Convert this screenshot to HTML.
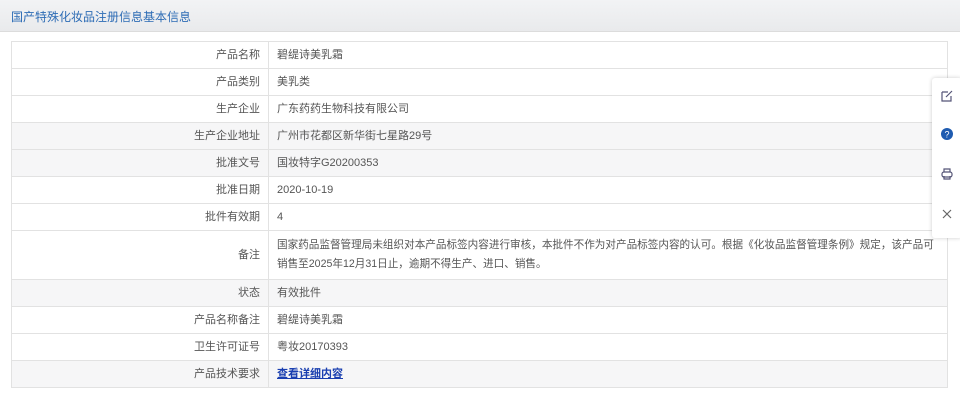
<!DOCTYPE html>
<html><head><meta charset="utf-8"><style>
body{margin:0;width:960px;height:401px;background:#fff;font-family:"Liberation Sans","Noto Sans CJK SC",sans-serif;font-size:11px;color:#555;position:relative;overflow:hidden}
.hd{position:absolute;left:0;top:0;width:960px;height:31px;background:linear-gradient(#f2f3f5,#e9eaec);border-bottom:1px solid #dcdcdc}
.hd span{position:absolute;left:11px;top:8px;color:#2d6cb5;font-size:12px}
table{position:absolute;left:11px;top:41px;width:937px;border-collapse:collapse;border:1px solid #ddd}
td{border:1px solid #e2e2e2;height:26px;padding:0 8px;line-height:17px}
td.l{width:240px;text-align:right;color:#555}
tr.g td{background:#f6f6f7}
a{color:#1a3fb0;text-decoration:underline;font-weight:bold}
.side{position:absolute;left:932px;top:78px;width:30px;height:160px;background:#fff;box-shadow:0 0 4px rgba(0,0,0,.2);border-radius:3px}
.side div{position:absolute;left:9px;width:12px;height:12px}
</style></head><body>
<div class="hd"><span>国产特殊化妆品注册信息基本信息</span></div>
<table>
<tr><td class="l">产品名称</td><td>碧缇诗美乳霜</td></tr>
<tr><td class="l">产品类别</td><td>美乳类</td></tr>
<tr><td class="l">生产企业</td><td>广东药药生物科技有限公司</td></tr>
<tr class="g"><td class="l">生产企业地址</td><td>广州市花都区新华街七星路29号</td></tr>
<tr class="g"><td class="l">批准文号</td><td>国妆特字G20200353</td></tr>
<tr><td class="l">批准日期</td><td>2020-10-19</td></tr>
<tr><td class="l">批件有效期</td><td>4</td></tr>
<tr><td class="l" style="height:48px">备注</td><td style="font-size:10.6px;line-height:19px">国家药品监督管理局未组织对本产品标签内容进行审核，本批件不作为对产品标签内容的认可。根据《化妆品监督管理条例》规定，该产品可销售至2025年12月31日止，逾期不得生产、进口、销售。</td></tr>
<tr class="g"><td class="l">状态</td><td>有效批件</td></tr>
<tr><td class="l">产品名称备注</td><td>碧缇诗美乳霜</td></tr>
<tr><td class="l">卫生许可证号</td><td>粤妆20170393</td></tr>
<tr class="g"><td class="l">产品技术要求</td><td><a>查看详细内容</a></td></tr>
</table>
<div class="side">
<div style="top:12px"><svg width="12" height="12" viewBox="0 0 12 12"><path d="M1 2h6M1 2v9h9V6M5 7l6-6" stroke="#557" fill="none" stroke-width="1.2"/></svg></div>
<div style="top:50px"><svg width="12" height="12"><circle cx="6" cy="6" r="6" fill="#1e5bb0"/><text x="6" y="9.5" font-size="9" fill="#fff" text-anchor="middle" font-family="Liberation Sans">?</text></svg></div>
<div style="top:90px"><svg width="12" height="12" viewBox="0 0 12 12"><rect x="1" y="4" width="10" height="5" rx="2" stroke="#557" fill="none" stroke-width="1.2"/><path d="M3 4V1h6v3M3 8v3h6V8" stroke="#557" fill="none" stroke-width="1.2"/></svg></div>
<div style="top:130px"><svg width="12" height="12" viewBox="0 0 12 12"><path d="M2 2l8 8M10 2l-8 8" stroke="#666" stroke-width="1.2"/></svg></div>
</div>
</body></html>
